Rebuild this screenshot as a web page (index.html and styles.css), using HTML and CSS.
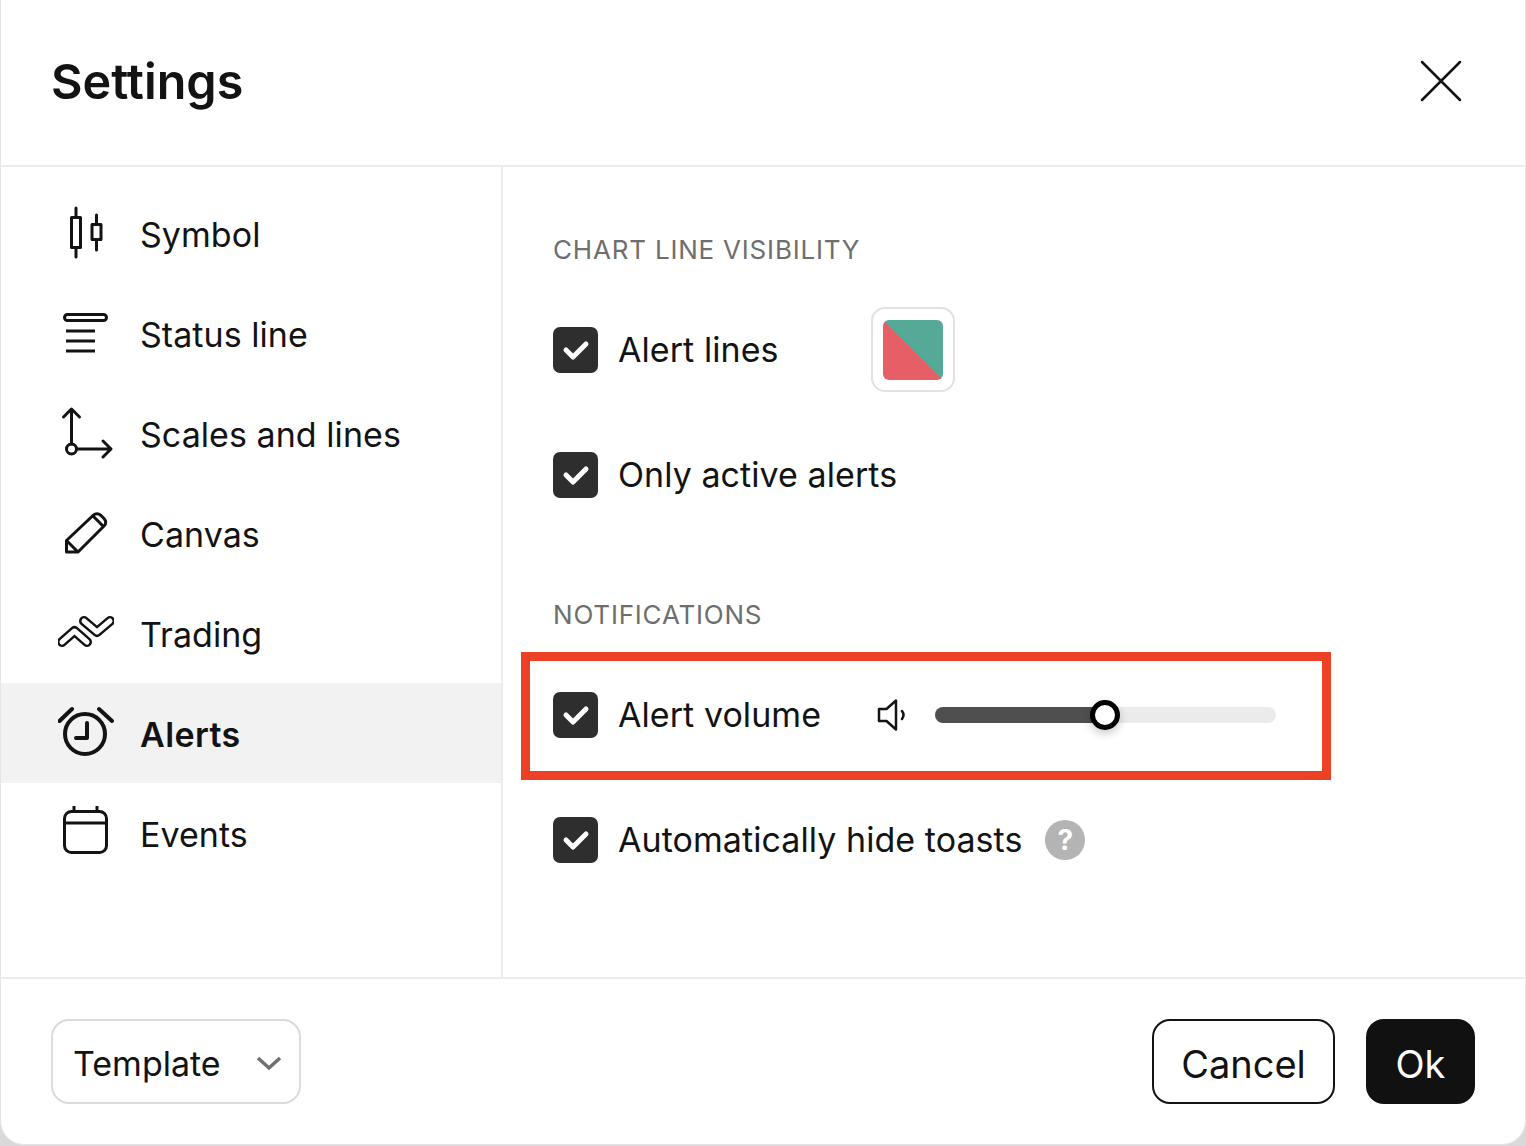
FILE: index.html
```html
<!DOCTYPE html>
<html lang="en">
<head>
    <meta charset="UTF-8">
    <title>Settings</title>
    <link rel="stylesheet" href="styles.css">
</head>
<body>

<div class="dialog">
    <header class="dialog-header">
        <h1>Settings</h1>
        <svg class="close-icon" width="42" height="42" viewBox="0 0 42 42"><path d="M2 2l38 38M40 2L2 40"/></svg>
    </header>

    <div class="dialog-body">
        <nav class="sidebar">
            <a class="nav-item">
                <svg class="nav-icon" width="56" height="56" viewBox="0 0 56 56"><rect x="13.500" y="11.500" width="9" height="30"/><rect x="34" y="18.500" width="9" height="15"/><path d="M18 2v9M18 43v8M38.500 9v8M38.500 35v9"/></svg>
                Symbol
            </a>
            <a class="nav-item">
                <svg class="nav-icon" width="56" height="56" viewBox="0 0 56 56"><rect x="6.500" y="8.500" width="42" height="6" rx="3"/><path class="flat" d="M8 25h29M8 35h29M8 45h29"/></svg>
                Status line
            </a>
            <a class="nav-item">
                <svg class="nav-icon" width="56" height="56" viewBox="0 0 56 56"><path d="M13.500 38V3M5.500 11l8-8 8 8M19 43h33.500M45 35l8 8-8 8"/><circle cx="13.500" cy="43" r="5"/></svg>
                Scales and lines
            </a>
            <a class="nav-item">
                <svg class="nav-icon" width="56" height="56" viewBox="0 0 56 56"><path d="M8.500 34.500L35 9.500q4-3.500 8 0l3 3q3.500 4 0 7.500L20 46H8.500zM8.500 34.500L20 46M35 10l9 9"/></svg>
                Canvas
            </a>
            <a class="nav-item">
                <svg class="nav-icon" width="56" height="56" viewBox="0 0 56 56"><path class="pill-outer" d="M4 36l12.500-11L29 36M26 15l13 11 13-11"/><path class="pill-inner" d="M4 36l12.500-11L29 36M26 15l13 11 13-11"/></svg>
                Trading
            </a>
            <a class="nav-item active">
                <svg class="nav-icon" width="56" height="56" viewBox="0 0 56 56"><circle cx="27" cy="28" r="20"/><path d="M29 17v15H18M1.500 15L14 3M41 3l13 12"/></svg>
                Alerts
            </a>
            <a class="nav-item">
                <svg class="nav-icon" width="56" height="56" viewBox="0 0 56 56"><rect x="6.500" y="5.500" width="42" height="41" rx="7"/><path class="flat" d="M6.500 17h42M16 0v5M39 0v5"/></svg>
                Events
            </a>
        </nav>

        <main class="content">
            <section class="section">
                <h2>CHART LINE VISIBILITY</h2>
                <div class="row">
                    <span class="checkbox"><svg width="28" height="22" viewBox="0 0 28 22"><path d="M4 11l7 7L24 5"/></svg></span>
                    <span class="label">Alert lines</span>
                    <span class="swatch-box"><span class="swatch"></span></span>
                </div>
                <div class="row">
                    <span class="checkbox"><svg width="28" height="22" viewBox="0 0 28 22"><path d="M4 11l7 7L24 5"/></svg></span>
                    <span class="label">Only active alerts</span>
                </div>
            </section>

            <section class="section notifications">
                <h2>NOTIFICATIONS</h2>
                <div class="row">
                    <span class="checkbox"><svg width="28" height="22" viewBox="0 0 28 22"><path d="M4 11l7 7L24 5"/></svg></span>
                    <span class="label">Alert volume</span>
                    <svg class="speaker" width="30" height="32" viewBox="0 0 30 32"><path d="M19 1.500v29L9.500 22H2V10h7.500zM25 12q3 4 0 8"/></svg>
                    <span class="slider"><span class="slider-fill"></span><span class="slider-thumb"></span></span>
                </div>
                <div class="row">
                    <span class="checkbox"><svg width="28" height="22" viewBox="0 0 28 22"><path d="M4 11l7 7L24 5"/></svg></span>
                    <span class="label">Automatically hide toasts</span>
                    <span class="help">?</span>
                </div>
                <div class="highlight"></div>
            </section>
        </main>
    </div>

    <footer class="dialog-footer">
        <button type="button" class="template-btn">
            Template
            <svg width="26" height="16" viewBox="0 0 26 16"><path d="M2 3l11 10L24 3"/></svg>
        </button>
        <div class="footer-actions">
            <button type="button" class="cancel-btn">Cancel</button>
            <button type="button" class="ok-btn">Ok</button>
        </div>
    </footer>
</div>

</body>
</html>
```

FILE: styles.css
```css
* {
    margin: 0;
    padding: 0;
    box-sizing: border-box;
}

body {
    font-family: 'Inter', 'Liberation Sans', sans-serif;
    background-color: #d9d9d9;
    color: #131313;
    width: 1526px;
    height: 1146px;
    overflow: hidden;
}

.dialog {
    width: 1526px;
    height: 1145px;
    background-color: #fff;
    border: 1px solid #e6e6e6;
    border-top: none;
    border-radius: 0 0 24px 24px;
    display: flex;
    flex-direction: column;
}

.dialog-header {
    height: 167px;
    flex: none;
    border-bottom: 2px solid #ececec;
    display: flex;
    justify-content: space-between;
    align-items: center;
    padding: 0 63px 3px 50px;
}

.dialog-header h1 {
    font-size: 48.500px;
    font-weight: 600;
}

.close-icon {
    margin-top: -1px;
}

.close-icon path {
    fill: none;
    stroke: #131313;
    stroke-width: 2.500;
    stroke-linecap: round;
}

.dialog-body {
    flex: 1;
    display: flex;
    min-height: 0;
}

.sidebar {
    width: 502px;
    flex: none;
    border-right: 2px solid #ececec;
    padding-top: 16px;
}

.nav-item {
    height: 100px;
    display: flex;
    align-items: center;
    gap: 26px;
    padding: 2px 0 0 57px;
    font-size: 34px;
    letter-spacing: 0.05px;
}

.nav-item.active {
    background-color: #f2f2f2;
    font-weight: 600;
    letter-spacing: 0.4px;
}

.nav-icon {
    flex: none;
}

.nav-icon path,
.nav-icon rect,
.nav-icon circle {
    fill: none;
    stroke: #131313;
    stroke-width: 3;
    stroke-linecap: round;
    stroke-linejoin: round;
}

.nav-icon .flat {
    stroke-linecap: butt;
}

.nav-icon .pill-outer {
    stroke-width: 10;
}

.nav-icon .pill-inner {
    stroke: #fff;
    stroke-width: 5;
}

.active .nav-icon path,
.active .nav-icon circle {
    stroke-width: 4;
}

.content {
    flex: 1;
    padding: 67px 0 0 50px;
}

.section {
    position: relative;
}

.section h2 {
    font-size: 26px;
    font-weight: 400;
    color: #6e6e6e;
    line-height: 32px;
    letter-spacing: 0.8px;
    margin-bottom: 21px;
}

.notifications {
    margin-top: 62px;
}

.row {
    height: 125px;
    display: flex;
    align-items: center;
}

.checkbox {
    width: 45px;
    height: 46px;
    flex: none;
    background-color: #2e2e2e;
    border-radius: 7px;
    display: flex;
    align-items: center;
    justify-content: center;
}

.checkbox path {
    fill: none;
    stroke: #fff;
    stroke-width: 5;
    stroke-linecap: round;
    stroke-linejoin: round;
}

.label {
    font-size: 34px;
    margin-left: 20px;
    letter-spacing: 0.06px;
}

.swatch-box {
    width: 84px;
    height: 85px;
    margin-left: 92px;
    border: 2px solid #e2e2e2;
    border-radius: 14px;
    display: flex;
    align-items: center;
    justify-content: center;
}

.swatch {
    width: 60px;
    height: 60px;
    border-radius: 6px;
    background: linear-gradient(45deg, #e75f66 50%, #54aa97 50%);
}

.speaker {
    margin-left: 56px;
}

.speaker path {
    fill: none;
    stroke: #131313;
    stroke-width: 2.500;
    stroke-linejoin: round;
    stroke-linecap: round;
}

.slider {
    width: 341px;
    height: 16px;
    margin-left: 28px;
    background-color: #ebebeb;
    border-radius: 8px;
    position: relative;
}

.slider-fill {
    display: block;
    width: 170px;
    height: 100%;
    background-color: #4f4f4f;
    border-radius: 8px 0 0 8px;
}

.slider-thumb {
    position: absolute;
    left: 155px;
    top: -7px;
    width: 30px;
    height: 30px;
    background-color: #fff;
    border: 5px solid #000;
    border-radius: 50%;
    box-shadow: 0 4px 8px rgba(0, 0, 0, 0.2);
}

.help {
    width: 40px;
    height: 40px;
    margin-left: 23px;
    background-color: #b4b4b4;
    color: #fff;
    border-radius: 50%;
    font-size: 28px;
    font-weight: 700;
    display: flex;
    align-items: center;
    justify-content: center;
}

.highlight {
    position: absolute;
    left: -32px;
    top: 53px;
    width: 810px;
    height: 128px;
    border: 9px solid #ec4125;
}

.dialog-footer {
    height: 167px;
    flex: none;
    border-top: 2px solid #ececec;
    display: flex;
    justify-content: space-between;
    align-items: center;
    padding: 0 50px 0 50px;
}

button {
    font-family: inherit;
    font-size: 34px;
    height: 85px;
    border-radius: 18px;
    color: #131313;
    background-color: #fff;
    padding-top: 4px;
}

.template-btn {
    width: 250px;
    border: 2px solid #dcdcdc;
    display: flex;
    align-items: center;
    justify-content: space-between;
    padding: 4px 17px 0 20px;
}

.template-btn svg {
    margin-top: -2px;
}

.template-btn path {
    fill: none;
    stroke: #707070;
    stroke-width: 3.500;
}

.footer-actions {
    display: flex;
    gap: 31px;
}

.cancel-btn {
    width: 183px;
    border: 2px solid #131313;
    font-size: 38px;
}

.ok-btn {
    width: 109px;
    border: none;
    background-color: #111;
    color: #fff;
    font-size: 38px;
}
```
